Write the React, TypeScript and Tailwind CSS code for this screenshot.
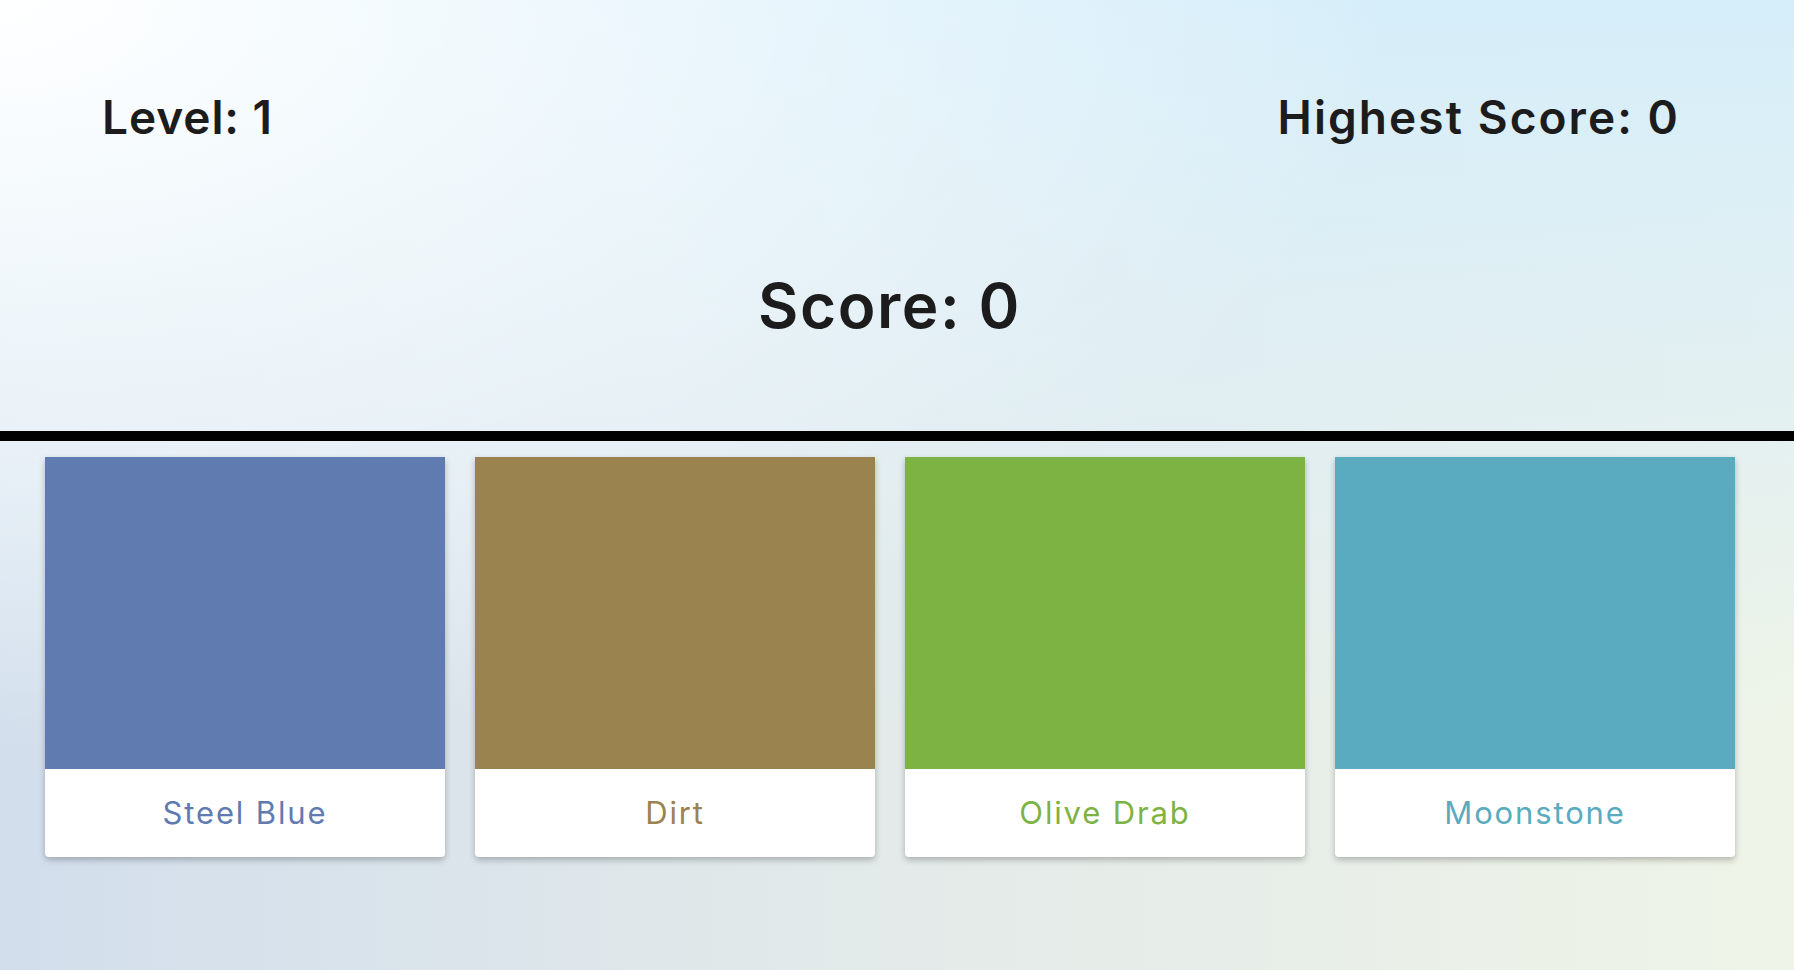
import React from "react";

const colors = [
  { name: "Steel Blue", bg: "bg-[#607bb0]", text: "text-[#607bb0]" },
  { name: "Dirt", bg: "bg-[#9a834f]", text: "text-[#9a834f]" },
  { name: "Olive Drab", bg: "bg-[#7db343]", text: "text-[#7db343]" },
  { name: "Moonstone", bg: "bg-[#5aabbf]", text: "text-[#5aabbf]" },
];

export default function App() {
  return (
    <div className="min-h-screen w-full font-['Inter',sans-serif] text-[#1c1c1c] bg-[radial-gradient(ellipse_at_0%_0%,rgba(255,255,255,1)_0%,rgba(255,255,255,0)_55%),linear-gradient(to_bottom,rgba(214,238,250,1)_0%,rgba(222,238,246,0.6)_45%,rgba(225,236,240,0)_75%),linear-gradient(to_right,#d2deec,#e3eae9_50%,#eef4e7)]">
      <div className="h-[431px] flex flex-col">
        <div className="flex justify-between pl-[102px] pr-[114px] pt-[88px]">
          <h2 className="text-[46px] leading-[58px] font-semibold tracking-[0.02em]">Level: 1</h2>
          <h2 className="text-[46px] leading-[58px] font-semibold tracking-[0.045em]">Highest Score: 0</h2>
        </div>
        <h1 className="mt-[122px] pr-[15px] text-center text-[62px] leading-[76px] font-semibold tracking-[0.025em]">
          Score: 0
        </h1>
      </div>
      <div className="h-[10px] bg-black" />
      <div className="grid grid-cols-4 gap-[30px] pl-[45px] pr-[59px] pt-[16px]">
        {colors.map((c) => (
          <div
            key={c.name}
            className="bg-white rounded-b-[4px] shadow-[0_3px_6px_rgba(0,0,0,0.25)] overflow-hidden"
          >
            <div className={`h-[312px] ${c.bg}`} />
            <div className={`h-[88px] flex items-center justify-center text-[31px] tracking-[0.06em] ${c.text}`}>
              {c.name}
            </div>
          </div>
        ))}
      </div>
    </div>
  );
}
